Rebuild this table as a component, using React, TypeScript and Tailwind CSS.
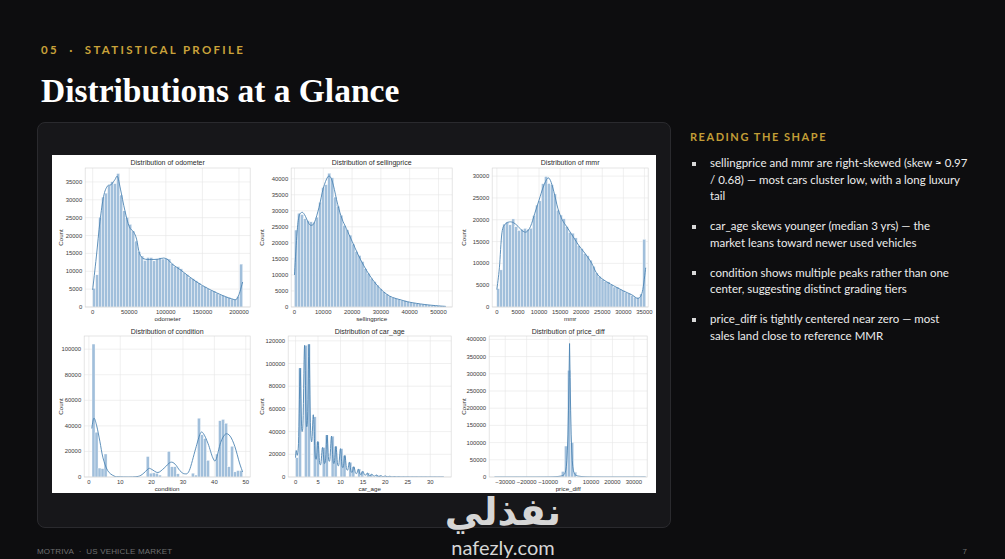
import React from "react";

type Pt = [number, number];

interface Chart {
  id: string;
  title: string;
  xlabel: string;
  x0: number;
  x1: number;
  ymax: number;
  left: number;
  right: number;
  top: number;
  bottom: number;
  xticks: number[];
  yticks: number[];
  bars: [number, number, number][];
  kde: Pt[];
  dense?: boolean;
}

const lerp = (pts: Pt[], x: number) => {
  if (x <= pts[0][0]) return pts[0][1];
  for (let i = 1; i < pts.length; i++) {
    if (x <= pts[i][0]) {
      const [xa, ya] = pts[i - 1];
      const [xb, yb] = pts[i];
      return ya + ((yb - ya) * (x - xa)) / (xb - xa);
    }
  }
  return pts[pts.length - 1][1];
};

// small deterministic wobble so bars don't look machine-perfect
const jit = (i: number) => {
  const s = Math.sin(i * 91.7 + 3.1) * 1000;
  return s - Math.floor(s) - 0.5;
};

function bins(start: number, end: number, n: number, fn: (x: number, i: number) => number) {
  const w = (end - start) / n;
  return Array.from({ length: n }, (_, i): [number, number, number] => {
    const a = start + i * w;
    return [a, a + w, fn(a + w / 2, i)];
  });
}

const range = (a: number, b: number, step: number) => {
  const out: number[] = [];
  for (let v = a; v <= b + 1e-9; v += step) out.push(v);
  return out;
};

function smoothPath(p: Pt[]) {
  const f = (n: number) => n.toFixed(2);
  let d = `M${f(p[0][0])},${f(p[0][1])}`;
  for (let i = 0; i < p.length - 1; i++) {
    const p0 = p[i - 1] ?? p[i];
    const p1 = p[i];
    const p2 = p[i + 1];
    const p3 = p[i + 2] ?? p2;
    const c1x = p1[0] + (p2[0] - p0[0]) / 6;
    const c1y = p1[1] + (p2[1] - p0[1]) / 6;
    const c2x = p2[0] - (p3[0] - p1[0]) / 6;
    const c2y = p2[1] - (p3[1] - p1[1]) / 6;
    d += ` C${f(c1x)},${f(c1y)} ${f(c2x)},${f(c2y)} ${f(p2[0])},${f(p2[1])}`;
  }
  return d;
}

function linePath(p: Pt[]) {
  return p.map((q, i) => `${i ? "L" : "M"}${q[0].toFixed(2)},${q[1].toFixed(2)}`).join(" ");
}

/* ---------- data ---------- */

const odoKde: Pt[] = [
  [0, 4800], [5000, 14000], [10000, 24000], [15000, 31000], [20000, 33800], [25000, 34200],
  [30000, 35500], [34000, 36500], [38000, 33000], [44000, 27000], [50000, 22500], [56000, 21000],
  [60000, 19000], [64000, 15000], [70000, 13500], [80000, 13300], [90000, 13400], [97000, 13700],
  [103000, 13200], [110000, 11800], [120000, 10400], [130000, 8800], [140000, 7300], [150000, 6000],
  [160000, 4900], [170000, 3900], [180000, 3000], [190000, 2300], [196000, 2100], [200000, 3500],
  [205000, 7000],
];
const odoBars = bins(0, 205000, 50, (x, i) => lerp(odoKde, x) * (1 + 0.09 * jit(i)));
odoBars[49][2] = 12000;
odoBars[0][2] = 5200;
odoBars[1][2] = 9000;

const spKde: Pt[] = [
  [0, 10000], [800, 22000], [1500, 28000], [2500, 29500], [3500, 28800], [5000, 26000],
  [6000, 25500], [7000, 26500], [8500, 31000], [10000, 37000], [11500, 40500], [12500, 40500],
  [13500, 38000], [15000, 32000], [16500, 27500], [18000, 24500], [20000, 20500], [22000, 16500],
  [24000, 13000], [26000, 10000], [28000, 7500], [30000, 5500], [32000, 4000], [34000, 3000],
  [37000, 2200], [40000, 1500], [45000, 800], [50000, 350], [52500, 200],
];
const spBars = bins(0, 52500, 50, (x, i) => lerp(spKde, x) * (1 + 0.08 * jit(i + 7)));
spBars[0][2] = 24000;

const mmrKde: Pt[] = [
  [0, 4000], [600, 9000], [1200, 17000], [2000, 19000], [3000, 19500], [4000, 19300],
  [5000, 18500], [6000, 17500], [7000, 17200], [8000, 18500], [9000, 21500], [10000, 24500],
  [11000, 27500], [12000, 29500], [12700, 29000], [13500, 26500], [14500, 22500], [15500, 20000],
  [16500, 18500], [17500, 17000], [18500, 15500], [19500, 14000], [20500, 12800], [21500, 11500],
  [22500, 10000], [23500, 8000], [24500, 6800], [26000, 5800], [28000, 4700], [30000, 3700],
  [32000, 2800], [33500, 2000], [34500, 3500], [35300, 9000],
];
const mmrBars = bins(0, 35300, 50, (x, i) => lerp(mmrKde, x) * (1 + 0.09 * jit(i + 3)));
mmrBars[0][2] = 4200;
mmrBars[1][2] = 8500;
mmrBars[2][2] = 19000;
mmrBars[49][2] = 15500;

const cw = 0.96;
const condBars: [number, number, number][] = (
  [
    [1.0, 104000], [1.96, 35000], [2.92, 7000], [3.88, 6500], [4.84, 18000],
    [18.28, 16000], [19.24, 3000], [20.2, 3200], [21.16, 2800], [22.12, 1500],
    [25.0, 20000], [25.96, 8000], [26.92, 8000], [27.88, 2500],
    [32.68, 3000], [33.64, 1500], [34.6, 46000], [35.56, 33000], [36.52, 30000], [37.48, 13000],
    [40.36, 18000], [41.32, 44000], [42.28, 45000], [43.24, 42000], [44.2, 8000], [45.16, 24000],
    [46.12, 4000], [47.08, 5000], [48.04, 5000],
  ] as Pt[]
).map(([a, h]) => [a, a + cw, h]);
const condKde: Pt[] = [
  [0.9, 38000], [1.6, 46000], [2.5, 40000], [3.5, 28000], [4.5, 15000], [6, 5000], [8, 800],
  [10, 100], [15, 200], [17, 2000], [19, 6500], [20, 6000], [22, 3500], [24, 7000], [26, 11500],
  [27.5, 10000], [29, 5000], [30.5, 2500], [32, 5000], [34, 22000], [35.5, 34000], [36.5, 34000],
  [38, 26000], [39.5, 15000], [40.5, 13500], [42, 27000], [43.5, 33500], [45, 32000], [46.5, 24000],
  [48, 11000], [49, 4000],
];

const ageCounts = [
  17000, 96000, 116000, 117000, 53000, 31000, 26000, 37000, 36000, 27000, 25000, 19000, 13000,
  9000, 7000, 5000, 3500, 2500, 1800, 1200, 900, 600, 400, 300, 200, 150, 120, 100, 90, 80, 70, 60,
  50, 50,
];
const ageEnv: Pt[] = ageCounts.map((c, i) => [i, c]);
const ageBars: [number, number, number][] = (() => {
  const w = 33 / 50;
  return Array.from({ length: 50 }, (_, i): [number, number, number] => {
    const a = i * w;
    const b = a + w;
    let h = 0;
    for (let k = 0; k <= 33; k++) if (k >= a && (k < b || (i === 49 && k <= b))) h += ageCounts[k];
    return [a, b, h];
  });
})();
const ageKde: Pt[] = range(0, 33, 0.05).map((x) => {
  const c = (Math.cos(2 * Math.PI * x) + 1) / 2;
  return [x, lerp(ageEnv, x) * (0.38 + 0.62 * Math.pow(c, 1.6))];
});

const pdKde: Pt[] = range(-35000, 35500, 250).map((x) => [
  x,
  370000 * Math.exp(-Math.pow(Math.abs(x) / 650, 1.25)) + 18000 * Math.exp(-Math.abs(x) / 2200),
]);
const pdBars = bins(-35500, 36500, 50, (x) => {
  const ax = Math.abs(x);
  return 200 * Math.exp(-ax / 9000) + (ax < 6000 ? 6000 * Math.exp(-ax / 2000) : 0);
});
pdBars[24][2] = 310000;
pdBars[23][2] = 90000;
pdBars[25][2] = 100000;
pdBars[22][2] = 16000;
pdBars[26][2] = 14000;

const charts: Chart[] = [
  {
    id: "odo", title: "Distribution of odometer", xlabel: "odometer",
    x0: -10250, x1: 215250, ymax: 38900, left: 33, right: 198, top: 13, bottom: 152,
    xticks: range(0, 200000, 50000), yticks: range(0, 35000, 5000), bars: odoBars, kde: odoKde,
  },
  {
    id: "sp", title: "Distribution of sellingprice", xlabel: "sellingprice",
    x0: -1150, x1: 54750, ymax: 43350, left: 38, right: 199, top: 13, bottom: 152,
    xticks: range(0, 50000, 10000), yticks: range(0, 40000, 5000), bars: spBars, kde: spKde,
  },
  {
    id: "mmr", title: "Distribution of mmr", xlabel: "mmr",
    x0: -1115, x1: 35880, ymax: 31860, left: 37, right: 193, top: 13, bottom: 152,
    xticks: range(0, 35000, 5000), yticks: range(0, 30000, 5000), bars: mmrBars, kde: mmrKde,
  },
  {
    id: "cond", title: "Distribution of condition", xlabel: "condition",
    x0: -1.5, x1: 51.4, ymax: 110300, left: 32, right: 198, top: 12, bottom: 153,
    xticks: range(0, 50, 10), yticks: range(0, 100000, 20000), bars: condBars, kde: condKde,
  },
  {
    id: "age", title: "Distribution of car_age", xlabel: "car_age",
    x0: -1.65, x1: 34.65, ymax: 124250, left: 35, right: 198, top: 12, bottom: 153,
    xticks: range(0, 30, 5), yticks: range(0, 120000, 20000), bars: ageBars, kde: ageKde, dense: true,
  },
  {
    id: "pd", title: "Distribution of price_diff", xlabel: "price_diff",
    x0: -37500, x1: 36200, ymax: 409850, left: 34, right: 192, top: 12, bottom: 153,
    xticks: range(-30000, 30000, 10000), yticks: range(0, 400000, 50000), bars: pdBars, kde: pdKde, dense: true,
  },
];

const fmt = (v: number) => (v < 0 ? `\u2212${Math.abs(v)}` : `${v}`);

function Histogram({ c }: { c: Chart }) {
  const sx = (v: number) => c.left + ((v - c.x0) / (c.x1 - c.x0)) * (c.right - c.left);
  const sy = (v: number) => c.bottom - (v / c.ymax) * (c.bottom - c.top);
  const kdePts: Pt[] = c.kde.map(([x, y]) => [sx(x), sy(y)]);
  const midY = (c.top + c.bottom) / 2;

  return (
    <svg viewBox="0 0 201 169" className="block h-full w-full" fontFamily="'Liberation Sans', Arial, sans-serif">
      <defs>
        <clipPath id={`clip-${c.id}`}>
          <rect x={c.left} y={c.top} width={c.right - c.left} height={c.bottom - c.top} />
        </clipPath>
      </defs>
      <text x={(c.left + c.right) / 2} y={9.6} textAnchor="middle" fontSize={7} fill="#2b2b2b">
        {c.title}
      </text>
      <g stroke="#e6e6e6" strokeWidth={0.6}>
        {c.xticks.map((t) => (
          <line key={`x${t}`} x1={sx(t)} x2={sx(t)} y1={c.top} y2={c.bottom} />
        ))}
        {c.yticks.map((t) => (
          <line key={`y${t}`} x1={c.left} x2={c.right} y1={sy(t)} y2={sy(t)} />
        ))}
      </g>
      <g clipPath={`url(#clip-${c.id})`}>
        {c.bars.map(([a, b, h], i) =>
          h > 0 ? (
            <rect
              key={i}
              x={sx(a)}
              y={sy(h)}
              width={Math.max(sx(b) - sx(a), 0.2)}
              height={c.bottom - sy(h)}
              fill="#a1bfdb"
              stroke="#ffffff"
              strokeWidth={0.35}
            />
          ) : null,
        )}
        <path
          d={c.dense ? linePath(kdePts) : smoothPath(kdePts)}
          fill="none"
          stroke="#4d84b3"
          strokeWidth={0.9}
          strokeLinejoin="round"
        />
      </g>
      <rect
        x={c.left}
        y={c.top}
        width={c.right - c.left}
        height={c.bottom - c.top}
        fill="none"
        stroke="#d4d4d4"
        strokeWidth={0.6}
      />
      <g fontSize={5.9} fill="#3a3a3a">
        {c.yticks.map((t) => (
          <text key={`yl${t}`} x={c.left - 3} y={sy(t) + 2} textAnchor="end">
            {fmt(t)}
          </text>
        ))}
        {c.xticks.map((t) => (
          <text key={`xl${t}`} x={sx(t)} y={c.bottom + 7} textAnchor="middle">
            {fmt(t)}
          </text>
        ))}
      </g>
      <text x={(c.left + c.right) / 2} y={c.bottom + 13.5} textAnchor="middle" fontSize={6.2} fill="#2b2b2b">
        {c.xlabel}
      </text>
      <text
        x={0}
        y={0}
        transform={`translate(10.5 ${midY}) rotate(-90)`}
        textAnchor="middle"
        fontSize={6.2}
        fill="#2b2b2b"
      >
        Count
      </text>
    </svg>
  );
}

const notes: string[][] = [
  ["sellingprice and mmr are right-skewed (skew \u2248 0.97", "/ 0.68) \u2014 most cars cluster low, with a long luxury", "tail"],
  ["car_age skews younger (median 3 yrs) \u2014 the", "market leans toward newer used vehicles"],
  ["condition shows multiple peaks rather than one", "center, suggesting distinct grading tiers"],
  ["price_diff is tightly centered near zero \u2014 most", "sales land close to reference MMR"],
];

export default function App() {
  return (
    <div className="relative flex h-[559px] w-[1005px] flex-col overflow-hidden bg-[#0d0d0f] font-['Lato',sans-serif]">
      <header className="px-[41px] pt-[42px]">
        <p className="text-[11.5px] leading-4 font-bold tracking-[0.2em] whitespace-nowrap text-[#c9a23a]">
          05&nbsp;&nbsp;·&nbsp;&nbsp;STATISTICAL PROFILE
        </p>
        <h1 className="mt-[14px] font-['Liberation_Serif',serif] text-[33.5px] leading-[38px] font-bold whitespace-nowrap text-white">
          Distributions at a Glance
        </h1>
      </header>

      <div className="mt-[12px] flex pl-[37px]">
        <div className="h-[406px] w-[634px] rounded-lg border border-[#2a2a2e] bg-[#17171a] pt-[32px] pl-[14px]">
          <div className="grid h-[338px] w-[604px] grid-cols-3 grid-rows-2 bg-white">
            {charts.map((c) => (
              <Histogram key={c.id} c={c} />
            ))}
          </div>
        </div>

        <aside className="ml-[19px] pt-[8px]">
          <h2 className="text-[11px] leading-[14px] font-bold tracking-[0.14em] text-[#c29d36]">
            READING THE SHAPE
          </h2>
          <ul className="mt-[11px] flex flex-col gap-[13.5px]">
            {notes.map((lines, i) => (
              <li key={i} className="flex">
                <span className="mt-[6.5px] ml-[2px] mr-[14px] h-[4px] w-[4px] shrink-0 bg-[#d8d8d8]" />
                <p className="text-[11.5px] leading-[16.5px] whitespace-nowrap text-[#ececec]">
                  {lines.map((l, j) => (
                    <React.Fragment key={j}>
                      {j > 0 && <br />}
                      {l}
                    </React.Fragment>
                  ))}
                </p>
              </li>
            ))}
          </ul>
        </aside>
      </div>

      <footer className="mt-[19px] flex items-center justify-between pr-[38px] pl-[37px] font-['Liberation_Sans',sans-serif] text-[8px] leading-[10px] tracking-[0.02em] text-[#6f6f6f]">
        <span>MOTRIVA&nbsp;&nbsp;·&nbsp;&nbsp;US VEHICLE MARKET</span>
        <span>7</span>
      </footer>

      {/* watermark overlay */}
      <div className="pointer-events-none absolute top-[491px] left-[433px] flex w-[140px] flex-col items-center text-[#d6d6d6]">
        <span dir="rtl" className="font-['DejaVu_Sans',sans-serif] text-[38px] leading-[42px] font-bold">
          نفذلي
        </span>
        <span className="mt-[4px] font-['Lato',sans-serif] text-[20px] leading-[20px]">nafezly.com</span>
      </div>
    </div>
  );
}
